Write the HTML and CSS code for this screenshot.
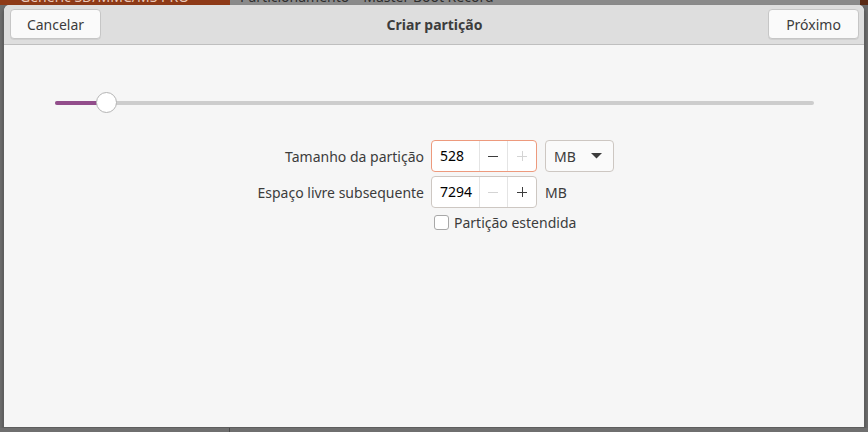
FILE: index.html
```html
<!DOCTYPE html>
<html lang="pt">
<head>
<meta charset="utf-8">
<title>Criar partição</title>
<link rel="stylesheet" href="styles.css">
</head>
<body>
<div class="backdrop">
  <div class="bg-strip">
    <div class="bg-device"><span>Generic SD/MMC/MS PRO</span></div>
    <div class="bg-part"><span>Particionamento</span><span class="bg-mbr">Master Boot Record</span></div>
  </div>
  <div class="dialog">
    <header class="headerbar">
      <button class="btn">Cancelar</button>
      <h1 class="title">Criar partição</h1>
      <button class="btn">Próximo</button>
    </header>
    <main class="content">
      <div class="slider">
        <div class="track"><div class="fill"></div><div class="knob"></div></div>
      </div>
      <div class="form">
        <label class="lbl">Tamanho da partição</label>
        <div class="spin focus">
          <span class="spin-val">528</span>
          <span class="spin-btn"><svg width="12" height="12" viewBox="0 0 12 12"><path d="M1 6.5h10" stroke="#3c3c3c" stroke-width="1"/></svg></span>
          <span class="spin-btn dim"><svg width="12" height="12" viewBox="0 0 12 12"><path d="M1 6.5h10M6.5 1v10" stroke="#d4d4d4" stroke-width="1"/></svg></span>
        </div>
        <div class="combo"><span>MB</span><svg width="11" height="6" viewBox="0 0 11 6"><path d="M0 0h11L5.5 5.5z" fill="#3c3c3c"/></svg></div>

        <label class="lbl">Espaço livre subsequente</label>
        <div class="spin">
          <span class="spin-val">7294</span>
          <span class="spin-btn dim"><svg width="12" height="12" viewBox="0 0 12 12"><path d="M1 6.5h10" stroke="#d4d4d4" stroke-width="1"/></svg></span>
          <span class="spin-btn"><svg width="12" height="12" viewBox="0 0 12 12"><path d="M1 6.5h10M6.5 1v10" stroke="#3c3c3c" stroke-width="1"/></svg></span>
        </div>
        <span class="unit">MB</span>

        <span></span>
        <label class="check"><span class="box"></span>Partição estendida</label>
      </div>
    </main>
  </div>
  <div class="bg-bottom"><div class="bg-bottom-left"></div></div>
</div>
</body>
</html>
```

FILE: styles.css
```css
* { box-sizing: border-box; }
html, body { margin: 0; padding: 0; }
body {
  width: 868px;
  height: 432px;
  overflow: hidden;
  background: #6c6c6c;
  font-family: "Noto Sans", "Open Sans", sans-serif;
  font-size: 14px;
  color: #3c3c3c;
}
.backdrop { display: flex; flex-direction: column; height: 432px; }
.bg-strip {
  display: flex;
  height: 5px;
  overflow: hidden;
  background: #5a2a14;
}
.bg-device {
  width: 230px;
  background: #8e3a17;
  color: #e9c7b8;
  padding-left: 20px;
  line-height: 18px;
  margin-top: -12px;
  height: 20px;
}
.bg-part {
  width: 630px;
  background: #8a8a8a;
  color: #2e2e2e;
  padding-left: 10px;
  line-height: 18px;
  margin-top: -12px;
  height: 20px;
  display: flex;
  gap: 14px;
}
.dialog {
  margin: 0 3px;
  height: 423px;
  background: #f6f6f6;
  border: 1px solid #5e5e5e;
  border-top: none;
  border-radius: 6px 6px 0 0;
  display: flex;
  flex-direction: column;
  overflow: hidden;
  box-shadow: 0 2px 3px rgba(0,0,0,0.3);
}
.headerbar {
  height: 40px;
  background: #dedede;
  border-bottom: 1px solid #bfbfbf;
  display: flex;
  align-items: center;
  justify-content: space-between;
  padding: 0 5px 1px 6px;
}
.btn {
  font: inherit;
  color: #3c3c3c;
  background: #fafafa;
  border: 1px solid #c6c6c6;
  border-radius: 4px;
  height: 30px;
  width: 91px;
  padding: 0;
  box-shadow: 0 1px 0 rgba(0,0,0,0.06);
}
.title {
  margin: 0;
  font-size: 14px;
  font-weight: bold;
  color: #3c3c3c;
}
.content { flex: 1; }
.slider { padding: 56px 50px 0 51px; }
.track {
  position: relative;
  height: 4px;
  background: #cdcdcd;
  border-radius: 2px;
}
.fill {
  width: 52px;
  height: 4px;
  background: #924d8b;
  border-radius: 2px;
}
.knob {
  position: absolute;
  left: 41px;
  top: -9px;
  width: 21px;
  height: 21px;
  border-radius: 50%;
  background: #fff;
  border: 1px solid #b4b4b4;
}
.form {
  display: grid;
  grid-template-columns: 420px 106px auto;
  column-gap: 7px;
  row-gap: 4px;
  margin-top: 35px;
  align-items: center;
}
.lbl { text-align: right; }
.spin {
  display: flex;
  height: 32px;
  border: 1px solid #cdc7c2;
  border-radius: 4px;
  background: #fff;
  overflow: hidden;
}
.spin.focus { border-color: #ed9a7d; }
.spin-val {
  width: 47px;
  padding-left: 8px;
  line-height: 30px;
  color: #000;
}
.spin-btn {
  width: 29px;
  border-left: 1px solid #e4e4e4;
  display: flex;
  align-items: center;
  justify-content: center;
}
.combo {
  width: 69px;
  height: 32px;
  margin-left: 1px;
  border: 1px solid #cdc7c2;
  border-radius: 4px;
  background: #fafafa;
  display: flex;
  align-items: center;
  justify-content: space-between;
  padding: 0 11px 0 8px;
}
.unit { margin-left: 1px; }
.check {
  grid-column: 2 / 4;
  display: flex;
  align-items: center;
  gap: 5px;
  margin-top: 1px;
  padding-left: 3px;
  white-space: nowrap;
}
.box {
  width: 15px;
  height: 15px;
  border: 1px solid #a8a8a8;
  border-radius: 3px;
  background: #fff;
}
.bg-bottom { flex: 1; background: #6f6f6f; }
.bg-bottom-left { width: 230px; height: 100%; border-right: 1px solid #4a4a4a; }
```
